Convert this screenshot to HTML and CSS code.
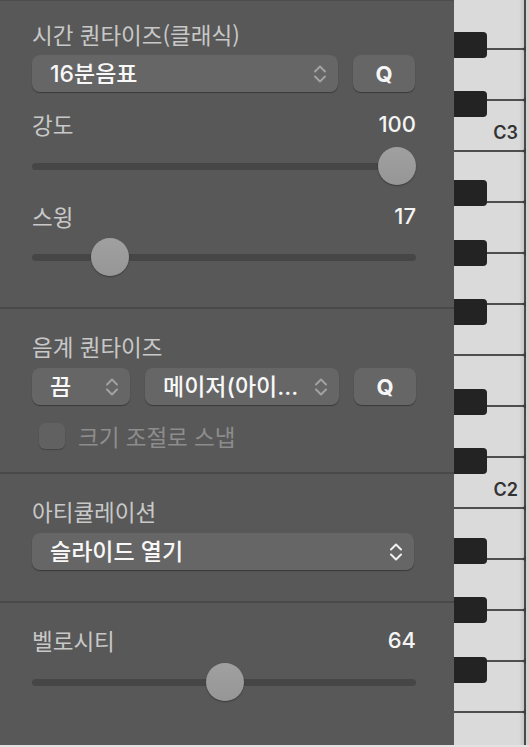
FILE: index.html
```html
<!DOCTYPE html>
<html lang="ko">
<head>
<meta charset="utf-8">
<title>퀀타이즈</title>
<link rel="stylesheet" href="styles.css">
</head>
<body>
<div class="frame">
  <div class="panel">
    <section class="sec sec1">
      <div class="label-row"><span class="label">시간 퀀타이즈(클래식)</span></div>
      <div class="ctrl-row gap-top9">
        <div class="select sel-main"><span class="sel-text">16분음표</span>
          <svg class="chev" viewBox="0 0 14 20"><path d="M2 7.5 L7 2.5 L12 7.5 M2 12.5 L7 17.5 L12 12.5"/></svg></div>
        <div class="qbtn">Q</div>
      </div>
      <div class="label-row gap-top20"><span class="label">강도</span><span class="value">100</span></div>
      <div class="slider gap-top11" style="--v:1"><div class="track"></div><div class="thumb"></div></div>
      <div class="label-row gap-top19"><span class="label">스윙</span><span class="value">17</span></div>
      <div class="slider gap-top10" style="--v:0.17"><div class="track"></div><div class="thumb"></div></div>
    </section>
    <section class="sec sec2">
      <div class="label-row"><span class="label">음계 퀀타이즈</span></div>
      <div class="ctrl-row gap-top10">
        <div class="select sel-off"><span class="sel-text">끔</span>
          <svg class="chev" viewBox="0 0 14 20"><path d="M2 7.5 L7 2.5 L12 7.5 M2 12.5 L7 17.5 L12 12.5"/></svg></div>
        <div class="select sel-scale"><span class="sel-text">메이저(아이...</span>
          <svg class="chev" viewBox="0 0 14 20"><path d="M2 7.5 L7 2.5 L12 7.5 M2 12.5 L7 17.5 L12 12.5"/></svg></div>
        <div class="qbtn">Q</div>
      </div>
      <div class="check-row gap-top18"><span class="checkbox"></span><span class="check-label">크기 조절로 스냅</span></div>
    </section>
    <section class="sec sec3">
      <div class="label-row"><span class="label">아티큘레이션</span></div>
      <div class="ctrl-row gap-top10">
        <div class="select sel-wide"><span class="sel-text">슬라이드 열기</span>
          <svg class="chev chev-bright" viewBox="0 0 14 20"><path d="M2 7.5 L7 2.5 L12 7.5 M2 12.5 L7 17.5 L12 12.5"/></svg></div>
      </div>
    </section>
    <section class="sec sec4">
      <div class="label-row"><span class="label">벨로시티</span><span class="value">64</span></div>
      <div class="slider gap-top11" style="--v:0.504"><div class="track"></div><div class="thumb"></div></div>
    </section>
  </div>
  <div class="piano">
    <div class="wkey wkey-first"></div>
    <div class="wkey"></div>
    <div class="wkey"><span class="note">C3</span></div>
    <div class="wkey"></div>
    <div class="wkey"></div>
    <div class="wkey"></div>
    <div class="wkey"></div>
    <div class="wkey"></div>
    <div class="wkey"></div>
    <div class="wkey"><span class="note">C2</span></div>
    <div class="wkey"></div>
    <div class="wkey"></div>
    <div class="wkey"></div>
    <div class="wkey"></div>
    <div class="wkey wkey-last"></div>
    <div class="bkey" style="top:32px"></div>
    <div class="bkey" style="top:91px"></div>
    <div class="bkey" style="top:180px"></div>
    <div class="bkey" style="top:240px"></div>
    <div class="bkey" style="top:299px"></div>
    <div class="bkey" style="top:389px"></div>
    <div class="bkey" style="top:448px"></div>
    <div class="bkey" style="top:538px"></div>
    <div class="bkey" style="top:597px"></div>
    <div class="bkey" style="top:657px"></div>
  </div>
</div>
</body>
</html>
```
FILE: styles.css
```css
* { box-sizing: border-box; }
html, body { margin: 0; padding: 0; }
body {
  width: 529px;
  height: 747px;
  overflow: hidden;
  background: #e2e2e2;
  font-family: Inter, "Noto Sans CJK KR", sans-serif;
}
.frame {
  display: flex;
  width: 529px;
  height: 745px;
}
.panel {
  width: 454px;
  height: 745px;
  background: #585858;
  border-top: 1px solid #4d4d4d;
  display: flex;
  flex-direction: column;
}
.sec {
  padding-left: 32px;
  padding-right: 38px;
  border-bottom: 2px solid #494949;
}
.sec1 { padding-top: 21px; padding-bottom: 31px; }
.sec2 { padding-top: 25px; padding-bottom: 23px; }
.sec3 { padding-top: 25px; padding-bottom: 31px; }
.sec4 { padding-top: 25px; border-bottom: none; flex: 1; }

.gap-top9 { margin-top: 9px; }
.gap-top10 { margin-top: 10px; }
.gap-top11 { margin-top: 11px; }
.gap-top18 { margin-top: 18px; }
.gap-top19 { margin-top: 19px; }
.gap-top20 { margin-top: 20px; }

.label-row {
  height: 24px;
  display: flex;
  justify-content: space-between;
  align-items: center;
}
.label {
  font-family: "Noto Sans CJK KR", sans-serif;
  font-size: 22.5px;
  line-height: 24px;
  color: #c8c8c8;
}
.value {
  font-size: 22px;
  line-height: 24px;
  font-weight: 500;
  color: #f4f4f4;
}
.ctrl-row {
  display: flex;
  gap: 15px;
  height: 37px;
}
.select {
  position: relative;
  height: 37px;
  border-radius: 8px;
  background: #666666;
  box-shadow: 0 1px 1px rgba(0,0,0,0.35);
  display: flex;
  align-items: center;
  justify-content: space-between;
  padding-left: 18px;
  padding-right: 11px;
}
.sel-main { width: 306px; }
.sel-off { width: 98px; }
.sel-scale { width: 194px; }
.sel-wide { width: 382px; }
.sel-text {
  font-size: 23px;
  line-height: 24px;
  font-weight: 500;
  color: #f8f8f8;
  white-space: nowrap;
}
.chev {
  width: 14px;
  height: 20px;
  fill: none;
  stroke: #a2a2a2;
  stroke-width: 2;
  stroke-linecap: round;
  stroke-linejoin: round;
}
.chev-bright { stroke: #f0f0f0; }
.qbtn {
  width: 62px;
  height: 37px;
  border-radius: 8px;
  background: #666666;
  box-shadow: 0 1px 1px rgba(0,0,0,0.35);
  display: flex;
  align-items: center;
  justify-content: center;
  font-size: 22px;
  font-weight: 700;
  color: #f6f6f6;
}
.slider {
  position: relative;
  height: 38px;
  display: flex;
  align-items: center;
}
.track {
  width: 100%;
  height: 7px;
  border-radius: 4px;
  background: #464646;
}
.thumb {
  position: absolute;
  top: 0;
  left: calc(var(--v) * (100% - 38px));
  width: 38px;
  height: 38px;
  border-radius: 50%;
  background: linear-gradient(#a0a0a0, #969696);
  box-shadow: 0 1px 1.5px rgba(0,0,0,0.35);
}
.check-row {
  height: 26px;
  display: flex;
  align-items: center;
}
.checkbox {
  width: 26px;
  height: 26px;
  margin-left: 7px;
  border-radius: 6px;
  background: #616161;
  box-shadow: 0 1px 1px rgba(0,0,0,0.25);
}
.check-label {
  margin-left: 13px;
  font-family: "Noto Sans CJK KR", sans-serif;
  font-size: 22.5px;
  line-height: 24px;
  color: #8d8d8d;
}

.piano {
  position: relative;
  width: 75px;
  height: 745px;
  display: flex;
  flex-direction: column;
  background: linear-gradient(to right, #dadada 0, #dadada 65px, #c6c6c6 70px, #4a4a4a 70px, #4a4a4a 72px, #d2d2d2 72px);
}
.wkey {
  position: relative;
  flex: none;
  height: 51px;
  width: 72px;
  border-bottom: 2px solid #4e4e4e;
  display: flex;
  align-items: flex-end;
  justify-content: flex-end;
  padding-right: 8px;
  padding-bottom: 8px;
}
.wkey::after {
  content: "";
  position: absolute;
  right: 0;
  bottom: -4px;
  border-top: 3px solid transparent;
  border-bottom: 3px solid transparent;
  border-right: 4px solid #3e3e3e;
}
.wkey-first { height: 50px; }
.wkey-last { flex: 1; border-bottom: none; }
.wkey-last::after { display: none; }
.note {
  font-size: 18px;
  line-height: 18px;
  font-weight: 600;
  color: #333333;
}
.bkey {
  position: absolute;
  left: 0;
  width: 33px;
  height: 26px;
  border-radius: 0 4px 4px 0;
  background: #232323;
}
```
